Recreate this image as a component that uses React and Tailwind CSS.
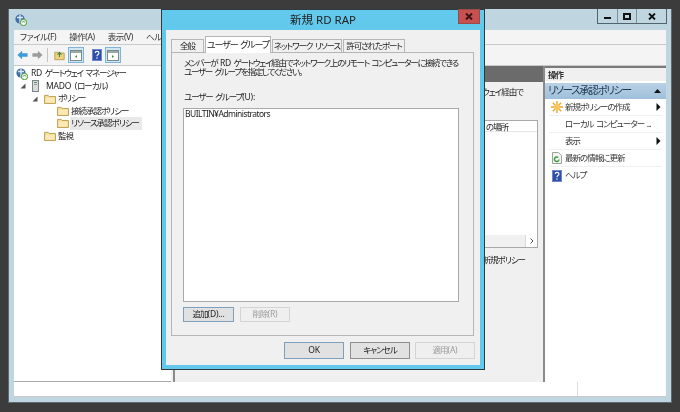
const FONT = "font-['Noto_Sans','Noto_Sans_CJK_JP',sans-serif] [font-feature-settings:'palt'] tracking-[-1px] [word-spacing:1.5px]";

function L({ children }) {
  return <span className="tracking-[-0.2px]">{children}</span>;
}

function Folder() {
  return (
    <svg width="12" height="10" viewBox="0 0 13 11" className="shrink-0">
      <path d="M0.5 1.5h4l1 1.2h7v7.8h-12z" fill="#f6dc8e" stroke="#b89a50" strokeWidth="1" />
      <rect x="1.5" y="4" width="10" height="5.5" fill="#fbeab8" />
    </svg>
  );
}

function HelpIcon({ size = 10 }) {
  return (
    <svg width={size} height={size + 2} viewBox="0 0 10 12" className="shrink-0">
      <rect x="0" y="0" width="10" height="12" fill="#2f4ea8" />
      <rect x="0.5" y="0.5" width="9" height="11" fill="none" stroke="#6d86cf" />
      <path d="M3.2 4c0-2.2 3.8-2.2 3.8 0 0 1.6-2 1.5-2 3.2" fill="none" stroke="#fff" strokeWidth="1.1" />
      <rect x="4.4" y="8.4" width="1.2" height="1.3" fill="#fff" />
    </svg>
  );
}

function RdIcon({ size = 12 }) {
  return (
    <svg width={size} height={size} viewBox="0 0 12 12" className="shrink-0">
      <circle cx="5" cy="5" r="4.6" fill="#3f6ea8" />
      <path d="M2 3.5h6M5 1v8" stroke="#dfeaf4" strokeWidth="1.4" />
      <circle cx="8.5" cy="8.5" r="3.2" fill="#f4f8f0" stroke="#4b9a3a" />
      <path d="M7 8.5a1.6 1.6 0 0 1 3 0" fill="none" stroke="#4b9a3a" />
    </svg>
  );
}

function PaneIcon({ right }) {
  return (
    <div className="w-[16px] h-[16px] bg-[#cfe6f5] border border-[#7eb4d8] flex items-center justify-center">
      <svg width="12" height="11" viewBox="0 0 12 11">
        <rect x="0.5" y="0.5" width="11" height="10" fill="#fff" stroke="#7a8a8a" />
        <rect x="1" y="1" width="10" height="2" fill="#9aa8a8" />
        <path d={right ? "M5 5l2 1.5L5 8z" : "M7 5L5 6.5 7 8z"} fill="#3d8a3d" />
      </svg>
    </div>
  );
}

function TreeRow({ indent, icon, label, selected, arrow }) {
  return (
    <div className={`h-[12.4px] shrink-0 flex items-center text-[8.5px] text-[#222] ${indent}`}>
      {arrow !== undefined && (
        <span className="w-[12px] shrink-0 flex items-center">
          {arrow && <svg width="6" height="6" viewBox="0 0 6 6"><path d="M5.5 0.5v5h-5z" fill="#555" /></svg>}
        </span>
      )}
      <span className="w-[13px] shrink-0 flex items-center">{icon}</span>
      <span className={`pl-px pr-[3px] leading-[12.4px] whitespace-nowrap ${selected ? "bg-[#e9e9e9]" : ""}`}>{label}</span>
    </div>
  );
}

function ActionRow({ icon, label, arrow, line = true }) {
  return (
    <div className={`mx-[4px] h-[17px] flex items-center text-[8.5px] text-[#333] ${line ? "border-b border-[#f0f0f0]" : ""}`}>
      <span className="w-[15px] shrink-0 flex justify-center">{icon}</span>
      <span className="ml-[1px] flex-1 whitespace-nowrap">{label}</span>
      {arrow && <svg width="5" height="8" viewBox="0 0 5 8" className="mr-[1px]"><path d="M0.5 0v8L4.5 4z" fill="#111" /></svg>}
    </div>
  );
}

function DlgButton({ w, h, label, variant }) {
  const styles = {
    focus: "bg-[#e1e1e1] border-[#7e9fbd] text-[#222]",
    normal: "bg-[#e1e1e1] border-[#8f8f8f] text-[#222]",
    disabled: "bg-[#efefef] border-[#d4d4d4] text-[#9c9c9c]",
  };
  return (
    <div className={`${w} ${h} border flex items-center justify-center text-[8.5px] whitespace-nowrap ${styles[variant]}`}>{label}</div>
  );
}

function Tab({ w, label, active }) {
  return active ? (
    <div className={`${w} h-[17px] -mb-px z-10 bg-white border border-b-0 border-[#b5b5b5] flex items-center justify-center text-[9px] tracking-[-1.1px] text-[#222] whitespace-nowrap`}>{label}</div>
  ) : (
    <div className={`${w} h-[13px] bg-[#f0f0f0] border border-b-0 border-[#b5b5b5] flex items-center justify-center text-[8.5px] tracking-[-1.1px] text-[#222] whitespace-nowrap`}>{label}</div>
  );
}

function Dialog() {
  return (
    <div className="absolute left-[161px] top-[9px] w-[324px] h-[361px] bg-[#62c9ec] border border-[#2f3a40] flex flex-col px-[4px] pb-[4px]">
      <div className="h-[20px] shrink-0 relative flex items-center justify-center text-[11.5px] tracking-normal [word-spacing:0px] text-[#222]">
        新規 RD RAP
        <div className="absolute right-[0px] top-[-1px] w-[22px] h-[15px] bg-[#c75050] border border-[#9c4a45] flex items-center justify-center">
          <svg width="8" height="7" viewBox="0 0 8 7"><path d="M1 0.5l6 6M7 0.5l-6 6" stroke="#3a1414" strokeWidth="2" /></svg>
        </div>
      </div>
      <div className="flex-1 bg-[#f0f0f0] flex flex-col pl-[5px] pr-[5px] pt-[6px]">
        <div className="h-[16px] flex items-end gap-[1px] shrink-0">
          <Tab w="w-[33px]" label="全般" />
          <Tab w="w-[66px]" label="ユーザー グループ" active />
          <Tab w="w-[70px]" label="ネットワーク リソース" />
          <Tab w="w-[62px]" label="許可されたポート" />
        </div>
        <div className="h-[284px] w-[303px] shrink-0 border border-[#b5b5b5] flex flex-col pl-[11px] pr-[14px] pt-[5px]">
          <div className="text-[8.5px] leading-[9px] tracking-[-1.25px] text-[#222] pl-[1px] whitespace-nowrap">
            メンバーが <L>RD</L> ゲートウェイ経由でネットワーク上のリモート コンピューターに接続できる<br />
            ユーザー グループを指定してください。
          </div>
          <div className="mt-[15px] text-[8.5px] leading-[11px] tracking-[-1.1px] text-[#222] pl-[1px]">ユーザー グループ<L>(U):</L></div>
          <div className="mt-[6px] h-[194px] bg-white border border-[#a9a9a9] px-[1px] text-[8.5px] tracking-[-0.55px] leading-[9px] text-[#222]">BUILTIN¥Administrators</div>
          <div className="mt-[5px] flex gap-[6px]">
            <DlgButton w="w-[51px]" h="h-[15px]" label={<>追加<L>(D)...</L></>} variant="focus" />
            <DlgButton w="w-[50px]" h="h-[15px]" label={<>削除<L>(R)</L></>} variant="disabled" />
          </div>
        </div>
        <div className="mt-[6px] flex justify-end gap-[5px]">
          <DlgButton w="w-[60px] mr-px" h="h-[17px]" label={<L>OK</L>} variant="focus" />
          <DlgButton w="w-[60px]" h="h-[17px]" label="キャンセル" variant="normal" />
          <DlgButton w="w-[60px]" h="h-[17px]" label={<>適用<L>(A)</L></>} variant="disabled" />
        </div>
      </div>
    </div>
  );
}

export default function App() {
  return (
    <div className={`relative w-[680px] h-[412px] bg-[#3c3c3c] pt-[9px] pl-[8px] pr-[8px] pb-[9px] overflow-hidden ${FONT} blur-[0.35px]`}>
      <div className="w-[664px] h-[394px] bg-[#bfd5df] border border-[#5d6a70] border-t-0 flex flex-col">
        <div className="h-[21px] shrink-0 flex justify-between pl-[6px] pr-[4px]">
          <div className="pt-[5px]"><RdIcon size={12} /></div>
          <div className="flex h-[15px] border border-t-0 border-[#51636c]">
            <div className="w-[19px] flex items-end justify-center pb-[4px]"><div className="w-[7px] h-[2px] bg-[#111]" /></div>
            <div className="w-[19px] border-l border-[#7f929b] flex items-center justify-center"><div className="w-[8px] h-[7px] border-[2px] border-[#111]" /></div>
            <div className="w-[30px] border-l border-[#7f929b] flex items-center justify-center">
              <svg width="8" height="7" viewBox="0 0 8 7"><path d="M1 0.5l6 6M7 0.5l-6 6" stroke="#111" strokeWidth="1.8" /></svg>
            </div>
          </div>
        </div>
        <div className="flex-1 mx-[5px] flex flex-col min-h-0">
          <div className="h-[15px] shrink-0 bg-[#f4f4f4] border-b border-[#c9c9c9] flex items-center gap-[13px] pl-[6px] text-[8.5px] tracking-[-0.4px] text-[#333] whitespace-nowrap">
            <span>ファイル(F)</span><span>操作(A)</span><span>表示(V)</span><span>ヘルプ(H)</span>
          </div>
          <div className="h-[21px] shrink-0 bg-[#f4f4f4] border-b border-[#c9c9c9] flex items-center pl-[3px]">
            <svg width="11" height="10" viewBox="0 0 13 11"><path d="M0.5 5.5L6 0.5v3h6.5v4H6v3z" fill="#3d9bd9" /></svg>
            <svg width="11" height="10" viewBox="0 0 13 11" className="ml-[4px]"><path d="M12.5 5.5L7 0.5v3H0.5v4H7v3z" fill="#9c9c9c" /></svg>
            <div className="w-px h-[14px] bg-[#c4c4c4] ml-[4px]" />
            <svg width="11" height="12" viewBox="0 0 14 13" className="ml-[6px]"><path d="M1 3h4l1 1h7v8.5H1z" fill="#ecd27c" stroke="#b3964e" /><path d="M7 9V4M4.5 6L7 3l2.5 3" fill="none" stroke="#3d8a3d" strokeWidth="1.4" /></svg>
            <div className="ml-[3px]"><PaneIcon /></div>
            <div className="ml-[8px]"><HelpIcon size={10} /></div>
            <div className="ml-[3px]"><PaneIcon right /></div>
          </div>
          <div className="flex-1 flex min-h-0">
            <div className="w-[157px] shrink-0 bg-white border-b border-[#a8a8a8] pt-[1px] flex flex-col">
              <div className="h-[13px] shrink-0 flex items-center pl-[2px] text-[8.5px] tracking-[-1.15px] text-[#222] whitespace-nowrap">
                <span className="w-[15px]"><RdIcon size={12} /></span><span><L>RD</L> ゲートウェイ マネージャー</span>
              </div>
              <TreeRow indent="pl-[6px]" arrow icon={
                <svg width="8" height="12" viewBox="0 0 8 12"><rect x="0.5" y="0.5" width="6" height="11" fill="#d8dcdc" stroke="#7b8585" /><rect x="2" y="2" width="3" height="1" fill="#5e8c5e" /><rect x="2" y="4" width="3" height="1" fill="#999" /></svg>
              } label={<><L>MADO (</L>ローカル<L>)</L></>} />
              <TreeRow indent="pl-[18px]" arrow icon={<Folder />} label="ポリシー" />
              <TreeRow indent="pl-[43px]" icon={<Folder />} label="接続承認ポリシー" />
              <TreeRow indent="pl-[43px]" icon={<Folder />} label="リソース承認ポリシー" selected />
              <TreeRow indent="pl-[30px]" icon={<Folder />} label="監視" />
            </div>
            <div className="w-[2px] shrink-0 bg-[#f0f0f0]" />
            <div className="flex-1 bg-[#f0f0f0] border-l-2 border-[#8a8a8a] flex flex-col pr-[5px] relative">
              <div className="h-[16px] shrink-0 -mr-[5px] bg-[#6b6b6b]" />
              <div className="h-[24px] pt-[4px] flex justify-end pr-[15px] text-[8.5px] text-[#222] whitespace-nowrap">このポリシーは、RD ゲートウェイ経由で</div>
              <div className="mt-[14px] h-[128px] bg-white border border-[#a9a9a9] flex flex-col">
                <div className="h-[11px] border-b border-[#e5e5e5] text-right pr-[29px] text-[8.5px] leading-[11px] text-[#222] whitespace-nowrap">の場所</div>
                <div className="flex-1" />
                <div className="h-[12px] bg-[#f0f0f0] flex justify-end">
                  <div className="w-[12px] bg-white border-l border-[#d8d8d8] flex items-center justify-center">
                    <svg width="4" height="6" viewBox="0 0 4 6"><path d="M0.5 0.5L3 3 0.5 5.5" fill="none" stroke="#555" /></svg>
                  </div>
                </div>
              </div>
              <div className="mt-[5px] text-right pr-[13px] text-[8.5px] leading-[13px] text-[#222] whitespace-nowrap">新規ポリシー</div>
            </div>
            <div className="w-[123px] shrink-0 bg-white border-l-2 border-[#8a8a8a] flex flex-col">
              <div className="h-[2px] bg-[#7a7a7a]" />
              <div className="h-[13px] bg-[#f0f0f0] pl-[3px] text-[8.5px] font-bold leading-[14px] text-[#333]">操作</div>
              <div className="mt-[2px] h-[16px] bg-gradient-to-b from-[#b9d2e6] to-[#9fbfda] flex items-center justify-between pl-[3px] pr-[5px] text-[10.5px] tracking-[-1.35px] text-[#1e3a55] whitespace-nowrap">
                リソース承認ポリシー
                <svg width="7" height="4" viewBox="0 0 7 4"><path d="M3.5 0L7 4H0z" fill="#111" /></svg>
              </div>
              <div>
                <ActionRow label="新規ポリシーの作成" arrow icon={
                  <svg width="12" height="12" viewBox="0 0 12 12"><g stroke="#f0a52a" strokeWidth="1.4"><path d="M6 0v12M0 6h12M1.8 1.8l8.4 8.4M10.2 1.8l-8.4 8.4" /></g><circle cx="6" cy="6" r="2.6" fill="#f7c65a" /></svg>
                } />
                <ActionRow label="ローカル コンピューター ..." />
                <ActionRow label="表示" arrow />
                <ActionRow label="最新の情報に更新" icon={
                  <svg width="10" height="12" viewBox="0 0 10 12"><path d="M0.5 0.5h6l3 3v8h-9z" fill="#f2f5f2" stroke="#9aa59a" /><path d="M7 7.5a2.3 2.3 0 1 1-.8-2" fill="none" stroke="#3a9a3a" strokeWidth="1.4" /></svg>
                } />
                <ActionRow label="ヘルプ" line={false} icon={<HelpIcon />} />
              </div>
            </div>
          </div>
          <div className="h-[15px] shrink-0 bg-white border-b border-[#c9c9c9] flex">
            <div className="w-[564px] border-r border-[#dedede]" />
          </div>
          <div className="h-[5px] shrink-0" />
        </div>
      </div>
      <Dialog />
    </div>
  );
}
